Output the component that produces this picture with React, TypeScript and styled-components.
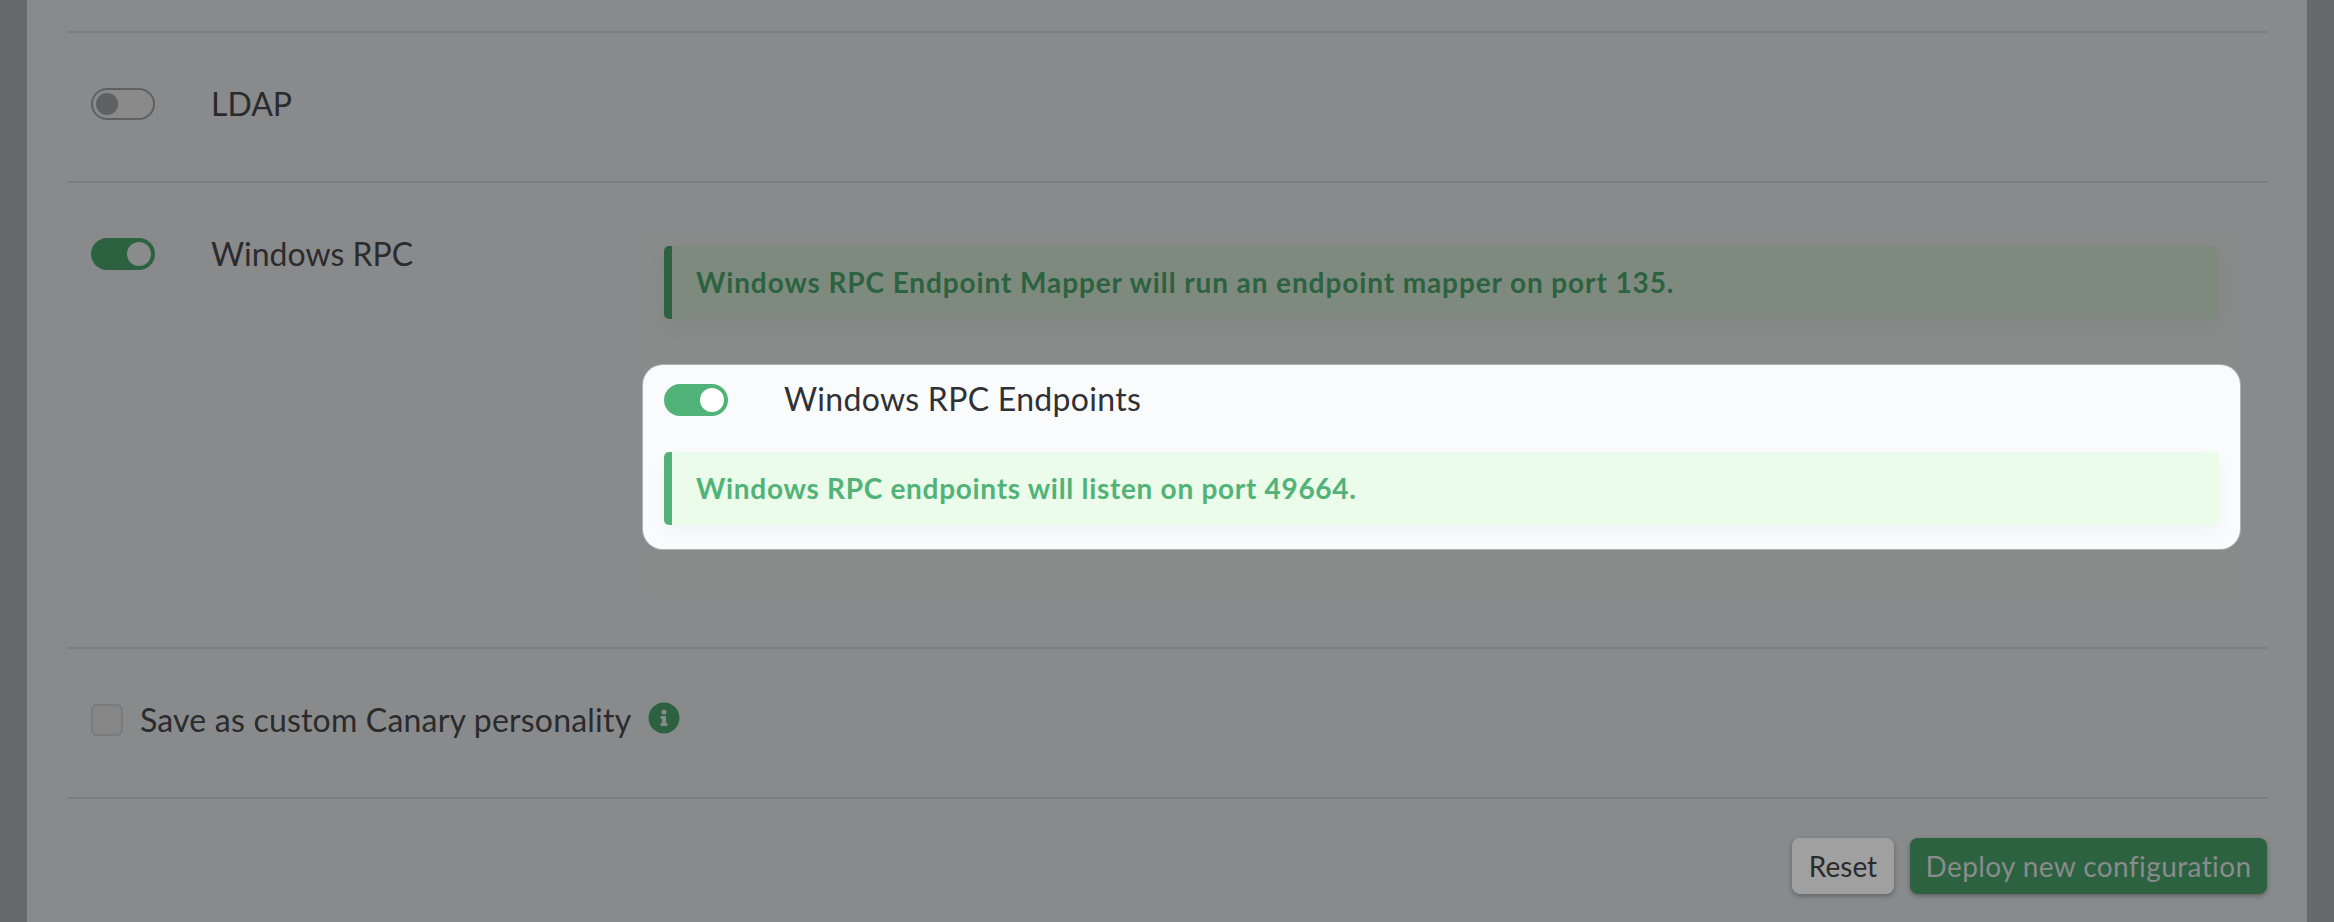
import React from "react";
import styled, {createGlobalStyle} from "styled-components";
import {FaInfoCircle} from "react-icons/fa";

const GlobalStyle = createGlobalStyle`
  html, body {
    margin: 0;
    padding: 0;
    height: 100%;
    overflow: hidden;
    background: #67686a;
    font-family: "Lato", "Liberation Sans", sans-serif;
  }
`

const App: React.FC = () => {
    return (
        <Page>
            <GlobalStyle/>
            <Panel>
                <Section $height={150} $padTop={55}>
                    <Toggle $tone="off"/>
                    <ToggleLabel>LDAP</ToggleLabel>
                </Section>
                <Section $height={466} $padTop={55}>
                    <Toggle $tone="dim"/>
                    <ToggleLabel>Windows RPC</ToggleLabel>
                    <Options>
                        <Banner $active={false} $spacing={0.89}>Windows RPC Endpoint Mapper will run an endpoint mapper on port 135.</Banner>
                        <Highlight>
                            <HighlightRow>
                                <Toggle $tone="on"/>
                                <HighlightLabel>Windows RPC Endpoints</HighlightLabel>
                            </HighlightRow>
                            <Banner $active={true} $spacing={0.7}>Windows RPC endpoints will listen on port 49664.</Banner>
                        </Highlight>
                    </Options>
                </Section>
                <Section $height={150} $padTop={55}>
                    <CheckBox/>
                    <CheckLabel>Save as custom Canary personality</CheckLabel>
                    <InfoIcon><FaInfoCircle size={32}/></InfoIcon>
                </Section>
                <Footer>
                    <ResetButton>Reset</ResetButton>
                    <DeployButton>Deploy new configuration</DeployButton>
                </Footer>
            </Panel>
        </Page>
    )
}

const Page = styled.div`
  display: flex;
  justify-content: center;
  height: 922px;
  overflow: hidden;
`
const Panel = styled.div`
  width: 2280px;
  box-sizing: border-box;
  padding: 31px 40px 0;
  background-color: #898a8c;
`
const Section = styled.div<{$height: number, $padTop: number}>`
  display: flex;
  align-items: flex-start;
  box-sizing: border-box;
  height: ${props => props.$height}px;
  padding: ${props => props.$padTop}px 0 0 24px;
  border-top: 2px solid #7c7d7f;
`
const Toggle = styled.div<{$tone: "off" | "dim" | "on"}>`
  position: relative;
  flex: none;
  box-sizing: border-box;
  width: 64px;
  height: 32px;
  border-radius: 16px;
  background-color: ${props => props.$tone === "off" ? "#8a8a8a" : props.$tone === "dim" ? "#2c6240" : "#52b378"};
  border: ${props => props.$tone === "off" ? "2px solid #5f6062" : "none"};

  &::after {
    content: "";
    position: absolute;
    top: ${props => props.$tone === "off" ? "3px" : "4px"};
    left: ${props => props.$tone === "off" ? "3px" : "36px"};
    width: ${props => props.$tone === "off" ? "22px" : "24px"};
    height: ${props => props.$tone === "off" ? "22px" : "24px"};
    border-radius: 50%;
    background-color: ${props => props.$tone === "off" ? "#5f6062" : props.$tone === "dim" ? "#8a8b8c" : "#ffffff"};
  }
`
const ToggleLabel = styled.div`
  margin-left: 56px;
  width: 432px;
  flex: none;
  font-size: 32px;
  line-height: 32px;
  color: #2a2b2d;
`
const Options = styled.div`
  flex: none;
  box-sizing: border-box;
  width: 1597px;
  height: 364px;
  margin-top: -6px;
  padding: 14px 21px 0;
  background-color: #898a8a;
  display: flex;
  flex-direction: column;
  gap: 46px;
`
const Banner = styled.div<{$active: boolean, $spacing: number}>`
  box-sizing: border-box;
  height: 73px;
  padding: 0 24px 2px;
  display: flex;
  align-items: center;
  border-left: 8px solid ${props => props.$active ? "#52b378" : "#2c6240"};
  border-radius: 5px;
  background-color: ${props => props.$active ? "#ebfcea" : "#7f8a7e"};
  color: ${props => props.$active ? "#52b378" : "#2c6240"};
  box-shadow: 0 8px 20px rgba(0, 0, 0, 0.035);
  font-size: 28px;
  font-weight: 700;
  letter-spacing: ${props => props.$spacing}px;
`
const Highlight = styled.div`
  margin: 0 -21px;
  padding: 18px 21px 23px;
  height: 184px;
  box-sizing: border-box;
  border-radius: 20px;
  background-color: #fafbfd;
  box-shadow: 0 0 0 1px rgba(250, 251, 253, 0.35);
`
const HighlightRow = styled.div`
  display: flex;
  align-items: center;
  gap: 56px;
  margin-bottom: 35px;
`
const HighlightLabel = styled.div`
  padding-bottom: 2px;
  font-size: 32px;
  line-height: 32px;
  letter-spacing: 0.3px;
  color: #2f3134;
`
const CheckBox = styled.div`
  flex: none;
  box-sizing: border-box;
  width: 32px;
  height: 32px;
  border: 2px solid #7a7b7d;
  border-radius: 6px;
  background-color: #868687;
`
const CheckLabel = styled.div`
  margin-left: 17px;
  font-size: 32px;
  line-height: 32px;
  letter-spacing: 0.2px;
  color: #2a2b2d;
`
const InfoIcon = styled.div`
  display: flex;
  margin: -2px 0 0 17px;
  color: #2c6240;
`
const Footer = styled.div`
  display: flex;
  justify-content: flex-end;
  gap: 16px;
  box-sizing: border-box;
  padding-top: 39px;
  border-top: 2px solid #7c7d7f;
`
const ResetButton = styled.button`
  box-sizing: border-box;
  width: 102px;
  height: 56px;
  padding: 0;
  border: none;
  border-radius: 8px;
  background-color: #a0a0a1;
  box-shadow: 0 2px 5px rgba(0, 0, 0, 0.3);
  color: #2a2b2d;
  font-family: inherit;
  font-size: 28px;
`
const DeployButton = styled.button`
  box-sizing: border-box;
  width: 357px;
  height: 56px;
  padding: 0;
  border: none;
  border-radius: 8px;
  background-color: #2c6240;
  box-shadow: 0 2px 5px rgba(0, 0, 0, 0.3);
  color: #8a8b8c;
  font-family: inherit;
  font-size: 28px;
  letter-spacing: 0.4px;
`
export default App
